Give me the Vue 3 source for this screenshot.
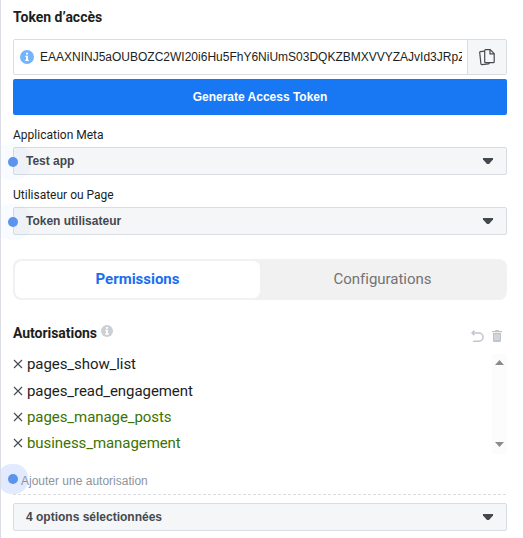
<script setup>
const token = 'EAAXNINJ5aOUBOZC2WI20i6Hu5FhY6NiUmS03DQKZBMXVVYZAJvId3JRpZ'
const fields = [
  { label: 'Application Meta', value: 'Test app' },
  { label: 'Utilisateur ou Page', value: 'Token utilisateur' },
]
const permissions = [
  { name: 'pages_show_list', added: false },
  { name: 'pages_read_engagement', added: false },
  { name: 'pages_manage_posts', added: true },
  { name: 'business_management', added: true },
]
</script>

<template>
  <main class="panel">
    <h2 class="title">Token d’accès</h2>
    <div class="token-row">
      <div class="token-field">
        <svg class="info-blue" width="14" height="14" viewBox="0 0 14 14">
          <circle cx="7" cy="7" r="7" fill="#73b4fc" />
          <path d="M6 2.8h2v1.8H6zM5.4 5.8H8v4h.8V11H5.2V9.800H6V7h-.6z" fill="#fff" />
        </svg>
        <span class="token">{{ token }}</span>
      </div>
      <button class="copy" aria-label="Copier">
        <svg width="16" height="17" viewBox="0 0 16 17" fill="none" stroke="#444950" stroke-width="1.2" stroke-linejoin="round">
          <path d="M5.7 1.600Q5.700.7 6.600.7h4.600l4 4v8.100q0 .9-.9.9H6.600q-.9 0-.9-.9z" />
          <path d="M11 .8v4.100h4.100" />
          <path d="M5.400 2.100L1.400 2.600Q.6 2.700.7 3.500l1.200 11.300q.1.900 1 .8l6.600-.8q.7-.1.8-.9" />
        </svg>
      </button>
    </div>
    <button class="generate">Generate Access Token</button>

    <div v-for="f in fields" :key="f.label" class="field">
      <div class="label">{{ f.label }}</div>
      <div class="select">
        <i class="beacon"></i>
        <span class="value">{{ f.value }}</span>
        <svg class="caret" width="10" height="6" viewBox="0 0 10 6"><path d="M0 0h10v1.500L6 6H4L0 1.500z" fill="#444950" /></svg>
      </div>
    </div>

    <div class="tabs">
      <div class="tab active">Permissions</div>
      <div class="tab">Configurations</div>
    </div>

    <div class="perm-head">
      <h2 class="perm-title">Autorisations</h2>
      <svg class="info-grey" width="12" height="12" viewBox="0 0 12 12">
        <circle cx="6" cy="6" r="6" fill="#ccd0d5" />
        <path d="M5 2h2v1.700H5zM4.200 4.800H7v3.600h.9v1.300H4.200V8.400H5V6h-.8z" fill="#fff" />
      </svg>
      <svg class="undo" width="13" height="13" viewBox="0 0 13 13" fill="none" stroke="#c0c5cd" stroke-width="1.500">
        <path d="M1 3h7a4 4 0 0 1 0 8.200H2.200" />
        <path d="M3.400.6L1 3l2.400 2.200" />
      </svg>
      <svg class="trash" width="10" height="12" viewBox="0 0 10 12">
        <path d="M0 1h3.200V0h3.600v1H10v1.300H0z" fill="#bec3c9" />
        <path d="M1 3h8v7.500Q9 12 7.500 12h-5Q1 12 1 10.500z" fill="#bec3c9" />
        <path d="M3 4.200v6M5 4.200v6M7 4.200v6" stroke="#e6e8eb" stroke-width="1" />
      </svg>
    </div>

    <div class="list">
      <ul class="items">
        <li v-for="p in permissions" :key="p.name" class="item" :class="{ added: p.added }">
          <svg width="10" height="10" viewBox="0 0 10 10"><path d="M1 1l8 8M9 1L1 9" stroke="#444950" stroke-width="1.100" fill="none" /></svg>
          <span>{{ p.name }}</span>
        </li>
      </ul>
      <div class="scrollbar">
        <svg width="9" height="5" viewBox="0 0 9 5"><path d="M0 5L4.500 0 9 5z" fill="#8b8b8b" /></svg>
        <svg width="9" height="5" viewBox="0 0 9 5"><path d="M0 0h9L4.500 5z" fill="#8b8b8b" /></svg>
      </div>
    </div>

    <div class="add">
      <i class="beacon strong"></i>
      <span class="placeholder">Ajouter une autorisation</span>
    </div>
    <svg class="dashes" width="494" height="1"><path d="M0 .5h494" stroke="#dadde1" stroke-dasharray="3 2" /></svg>
    <div class="select last">
      <span class="value">4 options sélectionnées</span>
      <svg class="caret" width="10" height="6" viewBox="0 0 10 6"><path d="M0 0h10v1.500L6 6H4L0 1.500z" fill="#444950" /></svg>
    </div>
  </main>
</template>

<style>
body { background: #fff; overflow: hidden; }
</style>

<style scoped>
* { box-sizing: border-box; }
.panel {
  width: 523px; height: 538px; padding: 7px 16px 0 12px;
  border-left: 1px solid #dadde6;
  font: 12px/16px "Liberation Sans", Arial, sans-serif; color: #1c1e21;
  overflow: hidden;
}
button { border: 0; padding: 0; font: inherit; }
.title, .perm-title { margin: 0; font: 700 14px/20px Roboto, sans-serif; color: #1c1e21; }
.title { height: 32px; }
.token-row { display: flex; height: 36px; border: 1px solid #dadde1; border-radius: 2px; }
.token-field { flex: 1; min-width: 0; display: flex; align-items: center; padding: 0 5px 0 6px; }
.info-blue { flex: none; margin-right: 6px; }
.token { overflow: hidden; white-space: nowrap; font-size: 12px; }
.copy { width: 39px; flex: none; display: flex; align-items: center; justify-content: center; background: #f5f6f7; border-left: 1px solid #dadde1; }
.generate { display: block; width: 100%; height: 36px; margin-top: 4px; border-radius: 2px; background: #1877f2; color: #fff; font-weight: 700; }
.field { padding-top: 12px; height: 60px; }
.label { height: 20px; font: 12px/16px Roboto, sans-serif; }
.select { position: relative; height: 28px; display: flex; align-items: center; justify-content: space-between; padding: 0 13px 0 12px; background: #f5f6f7; border: 1px solid #d8dce3; border-radius: 2px; }
.value { font: 700 12px/16px "Liberation Sans", Arial, sans-serif; color: #444950; }
.beacon { position: absolute; left: -6px; top: 9px; width: 10px; height: 10px; border-radius: 50%; background: #5c94ed; box-shadow: 0 0 0 13px rgba(24, 119, 242, .03); }
.tabs { display: flex; height: 41px; margin-top: 24px; padding: 2px; border-radius: 8px; background: #f1f1f1; font: 15px/36px Roboto, sans-serif; letter-spacing: -.02px; color: #737373; text-align: center; }
.tab { flex: 1; }
.active { background: #fff; border-radius: 7px; color: #1a6eee; font-weight: 700; }
.perm-head { display: flex; height: 54px; padding: 22px 5px 0 0; }
.perm-title { padding-top: 1px; letter-spacing: -.04px; }
.info-grey { margin: 3px 0 0 4px; }
.undo { margin: 8px 8px 0 auto; }
.trash { margin-top: 8px; }
.list { display: flex; height: 100px; }
.items { flex: 1; margin: 0; padding: 0; list-style: none; font: 15px/20px Roboto, sans-serif; letter-spacing: -.07px; }
.item { display: flex; align-items: center; gap: 4px; height: 26.400px; padding-bottom: 6px; }
.added { color: #3b7300; }
.scrollbar { width: 15px; display: flex; flex-direction: column; align-items: center; justify-content: space-between; padding: 6px 0 7px; background: #fcfcfc; }
.add { position: relative; height: 40px; padding: 19px 0 0 8px; color: #8d949e; }
.placeholder { position: relative; z-index: 1; }
.strong { left: -5px; top: 20px; box-shadow: 0 0 0 10px #e1eafe; }
.dashes { display: block; }
.last { margin-top: 8px; }
</style>
